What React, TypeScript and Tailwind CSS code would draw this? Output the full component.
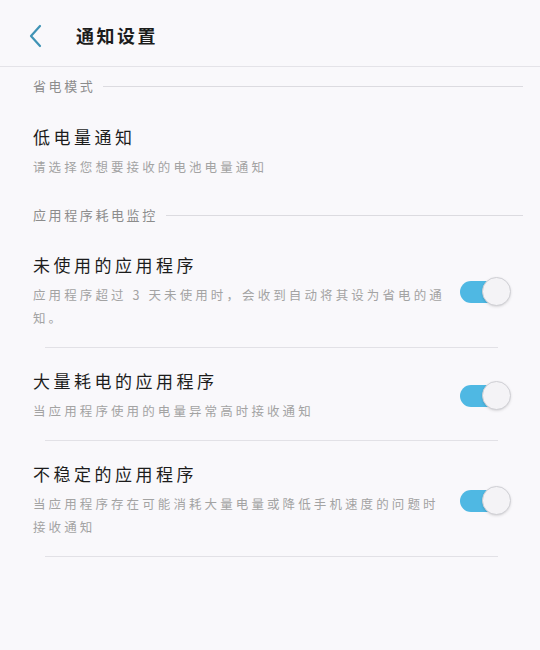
const font = { fontFamily: '"Noto Sans CJK SC", "Noto Sans", sans-serif' };

function Toggle() {
  return (
    <div className="relative w-[51px] h-[29px] shrink-0">
      <div className="absolute left-0 top-[4px] w-[46px] h-[22px] rounded-full bg-[#4fb8e3]" />
      <div className="absolute right-0 top-0 w-[29px] h-[29px] rounded-full bg-[#f4f3f6] border border-[#cfcfd4] shadow-sm" />
    </div>
  );
}

function Section({ title }: { title: string }) {
  return (
    <div className="flex items-center pl-[33px] pr-[17px] h-[38px]">
      <span className="text-[13px] text-[#8c8c8c] tracking-[2.6px]">{title}</span>
      <div className="flex-1 h-px bg-[#dcdbe0] ml-[8px]" />
    </div>
  );
}

function ToggleRow({ title, desc, first }: { title: string; desc: string; first?: boolean }) {
  return (
    <div>
      <div className={`flex items-center pl-[33px] pr-[29px] pb-[18px] ${first ? "pt-[19px]" : "pt-[21px]"}`}>
        <div className="flex-1 pr-[12px]">
          <div className="text-[17px] text-[#1c1c1c] tracking-[3.5px] leading-[24px]">{title}</div>
          <div className="mt-[6px] text-[12.5px] text-[#a3a3a3] tracking-[3.1px] leading-[23px]">{desc}</div>
        </div>
        <Toggle />
      </div>
      <div className="ml-[45px] mr-[42px] h-px bg-[#e2e1e6]" />
    </div>
  );
}

export default function App() {
  return (
    <div className="w-[540px] h-[650px] bg-[#f9f8fb] overflow-hidden" style={font}>
      <div className="flex items-center h-[67px] pt-[5px] border-b border-[#e4e3e8]">
        <svg className="ml-[26px]" width="18" height="24" viewBox="0 0 18 24" fill="none">
          <path d="M14 2 L5 12 L14 22" stroke="#3f93b5" strokeWidth="2.2" strokeLinecap="round" strokeLinejoin="round" />
        </svg>
        <span className="ml-[32px] text-[18px] font-bold text-[#1c1c1c] tracking-[2.5px]">通知设置</span>
      </div>
      <Section title="省电模式" />
      <div className="pl-[33px] pt-[20px] pb-[18px]">
        <div className="text-[17px] text-[#1c1c1c] tracking-[3.5px] leading-[24px]">低电量通知</div>
        <div className="mt-[6px] text-[12.5px] text-[#a3a3a3] tracking-[3.1px] leading-[23px]">
          请选择您想要接收的电池电量通知
        </div>
      </div>
      <Section title="应用程序耗电监控" />
      <ToggleRow
        first
        title="未使用的应用程序"
        desc="应用程序超过 3 天未使用时，会收到自动将其设为省电的通知。"
      />
      <ToggleRow title="大量耗电的应用程序" desc="当应用程序使用的电量异常高时接收通知" />
      <ToggleRow
        title="不稳定的应用程序"
        desc="当应用程序存在可能消耗大量电量或降低手机速度的问题时接收通知"
      />
    </div>
  );
}
